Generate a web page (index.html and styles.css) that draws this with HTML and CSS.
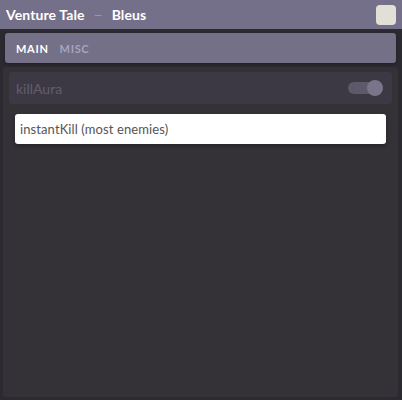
FILE: index.html
```html
<!DOCTYPE html>
<html lang="en">
<head>
    <meta charset="UTF-8">
    <meta name="viewport" content="width=device-width, initial-scale=1.0">
    <title>Venture Tale - Bleus</title>
    <link rel="stylesheet" href="styles.css">
</head>
<body>

    <div class="window">
        <div class="titlebar">
            <span class="title">Venture Tale <span class="dash">&mdash;</span> Bleus</span>
            <button class="close"></button>
        </div>

        <div class="tabs">
            <span class="tab active">MAIN</span>
            <span class="tab">MISC</span>
        </div>

        <div class="content">
            <div class="row">
                <span class="row-label">killAura</span>
                <div class="toggle"><div class="knob"></div></div>
            </div>

            <div class="field">instantKill (most enemies)</div>
        </div>
    </div>

</body>
</html>
```

FILE: styles.css
```css
/* Basic Reset */
* {
    margin: 0;
    padding: 0;
    box-sizing: border-box;
}

body {
    font-family: Lato, "Open Sans", sans-serif;
    background-color: #2a282d;
    width: 402px;
    height: 400px;
    overflow: hidden;
}

/* Window */
.window {
    display: flex;
    flex-direction: column;
    height: 400px;
    background-color: #2c2a31;
}

.titlebar {
    height: 29px;
    background-color: #757089;
    display: flex;
    align-items: center;
    justify-content: space-between;
    padding: 0 6px 0 6px;
}

.title {
    color: #fff;
    font-weight: bold;
    font-size: 14px;
    letter-spacing: 0.1px;
}

.dash {
    color: #aaa6ba;
    font-weight: normal;
    font-size: 10px;
    margin: 0 6px;
    vertical-align: 2px;
}

.close {
    width: 20px;
    height: 20px;
    border: none;
    border-radius: 4px;
    background-color: #e2dfd7;
}

/* Tabs */
.tabs {
    margin: 4px 6px 0 5px;
    height: 30px;
    background-color: #747088;
    border-radius: 3px;
    display: flex;
    align-items: center;
    gap: 11px;
    padding-left: 11px;
    box-shadow: 0 1px 3px rgba(0, 0, 0, 0.3);
}

.tab {
    font-size: 11px;
    font-weight: bold;
    letter-spacing: 0.7px;
    color: #a9a4be;
}

.tab.active {
    color: #fff;
}

/* Content */
.content {
    flex: 1;
    margin: 4px 4px 3px 3px;
    background-color: #343137;
    border-radius: 3px;
    padding: 5px 6px 0 6px;
}

.row {
    height: 32px;
    background-color: #3c3944;
    border-radius: 3px;
    display: flex;
    align-items: center;
    justify-content: space-between;
    padding: 0 10px 0 7px;
}

.row-label {
    color: #625e6e;
    font-size: 14px;
}

.toggle {
    position: relative;
    width: 34px;
    height: 12px;
    border-radius: 6px;
    background-color: #5d596b;
}

.knob {
    position: absolute;
    right: -1px;
    top: -2px;
    width: 16px;
    height: 16px;
    border-radius: 50%;
    background-color: #7a758b;
}

.field {
    margin: 10px 6px 0 6px;
    height: 30px;
    background-color: #fff;
    border-radius: 3px;
    color: #555;
    font-size: 13px;
    letter-spacing: 0.1px;
    display: flex;
    align-items: center;
    padding-left: 5px;
    box-shadow: 0 2px 4px rgba(0, 0, 0, 0.3);
}
```
